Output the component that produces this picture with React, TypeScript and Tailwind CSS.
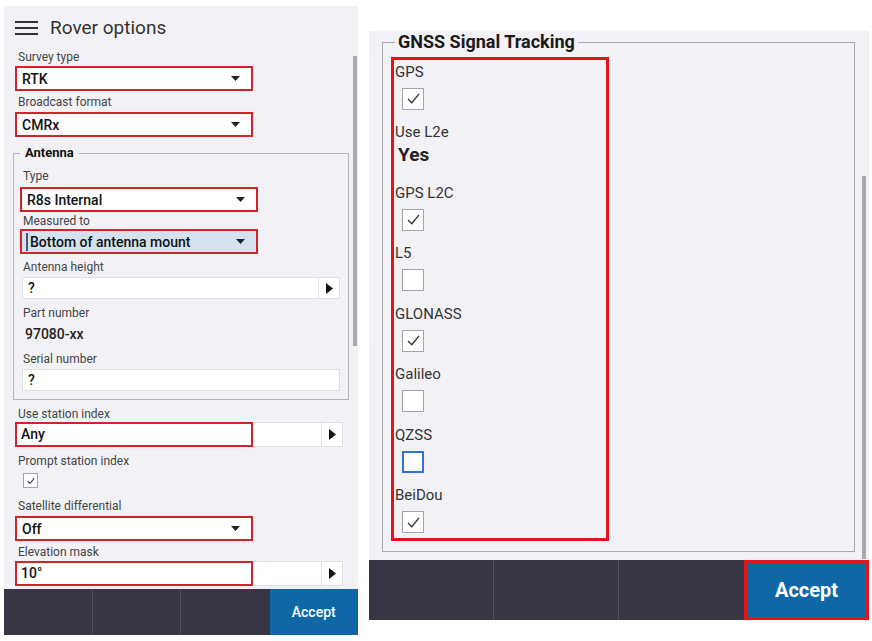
import React from "react";

type CheckProps = { checked?: boolean; size: number; focused?: boolean; className?: string };

function Check({ checked, size, focused, className = "" }: CheckProps) {
  return (
    <div
      className={`flex items-center justify-center bg-white ${
        focused ? "border-2 border-[#2f74d0]" : "border border-[#a3a3a8]"
      } ${className}`}
      style={{ width: size, height: size }}
    >
      {checked && (
        <svg viewBox="0 0 20 20" width={size - 5} height={size - 5}>
          <polyline
            points="3.5,10.5 8,15 16.5,4.5"
            fill="none"
            stroke="#333"
            strokeWidth={size < 18 ? 2.2 : 1.6}
          />
        </svg>
      )}
    </div>
  );
}

function Caret() {
  return (
    <svg width="9" height="5" viewBox="0 0 9 5">
      <polygon points="0,0 9,0 4.5,5" fill="#222" />
    </svg>
  );
}

function PlayArrow() {
  return (
    <svg width="7" height="11" viewBox="0 0 7 11">
      <polygon points="0,0 7,5.5 0,11" fill="#111" />
    </svg>
  );
}

function Label({ children, className = "" }: { children: React.ReactNode; className?: string }) {
  return <div className={`text-[12px] leading-[14px] text-[#444] ${className}`}>{children}</div>;
}

// dropdown with the red marker border
function Select({ value, active, className = "" }: { value: string; active?: boolean; className?: string }) {
  return (
    <div
      className={`flex h-[25px] w-[238px] items-center justify-between border-2 border-[#d4212a] pr-[11px] ${
        active ? "bg-[#d3e2ef] pl-[4px]" : "bg-white pl-[5px]"
      } ${className}`}
    >
      <span
        className={`text-[14px] font-medium leading-[18px] text-[#111] ${
          active ? "border-l-2 border-[#3d5d7d] pl-[2px]" : ""
        }`}
      >
        {value}
      </span>
      <Caret />
    </div>
  );
}

function ArrowInput({
  value,
  marked,
  width,
  height,
  arrow = true,
  className = "",
}: {
  value: string;
  marked?: boolean;
  width: number;
  height: number;
  arrow?: boolean;
  className?: string;
}) {
  return (
    <div
      className={`relative flex border border-[#dedee4] bg-white ${className}`}
      style={{ width, height }}
    >
      <div className="flex flex-1 items-center pl-[5px] text-[14px] font-medium text-[#111]">{value}</div>
      {arrow && (
        <div className="flex w-[21px] items-center justify-center border-l border-[#dedee4]">
          <PlayArrow />
        </div>
      )}
      {marked && (
        <div className="absolute -left-px -top-px h-[25px] w-[238px] border-2 border-[#d4212a]" />
      )}
    </div>
  );
}

function RoverOptions() {
  return (
    <div className="ml-[4px] mt-[6px] flex h-[629px] w-[354px] flex-col bg-[#f2f2f6]">
      <div className="relative flex-1">
        <div className="flex h-[44px] items-center gap-[12px] pl-[11px]">
          <div className="flex w-[23px] flex-col gap-[4px]">
            <span className="h-[2px] bg-[#333]" />
            <span className="h-[2px] bg-[#333]" />
            <span className="h-[2px] bg-[#333]" />
          </div>
          <span className="text-[19px] leading-[22px] text-[#333]">Rover options</span>
        </div>

        <Label className="pl-[14px]">Survey type</Label>
        <Select value="RTK" className="ml-[11px] mt-[2px]" />

        <Label className="mt-[4px] pl-[14px]">Broadcast format</Label>
        <Select value="CMRx" className="ml-[11px] mt-[3px]" />

        <fieldset className="ml-[9px] mt-[8px] w-[336px] border border-[#b4b4bc] pb-[8px] pl-[6px]">
          <legend className="px-[5px] text-[13px] font-bold leading-[16px] text-[#111]">Antenna</legend>
          <Label className="mt-[8px] pl-[3px]">Type</Label>
          <Select value="R8s Internal" className="mt-[4px]" />
          <Label className="mt-[2px] pl-[3px]">Measured to</Label>
          <Select value="Bottom of antenna mount" active className="mt-[1px]" />
          <Label className="mt-[6px] pl-[3px]">Antenna height</Label>
          <ArrowInput value="?" width={318} height={22} className="ml-[2px] mt-[3px]" />
          <Label className="mt-[7px] pl-[3px]">Part number</Label>
          <div className="mt-[5px] pl-[5px] text-[14px] font-medium leading-[18px] text-[#222]">97080-xx</div>
          <Label className="mt-[9px] pl-[3px]">Serial number</Label>
          <ArrowInput value="?" width={318} height={22} arrow={false} className="ml-[2px] mt-[3px]" />
        </fieldset>

        <Label className="mt-[7px] pl-[14px]">Use station index</Label>
        <ArrowInput value="Any" marked width={328} height={25} className="ml-[11px] mt-[1px]" />

        <Label className="mt-[7px] pl-[14px]">Prompt station index</Label>
        <Check checked size={15} className="ml-[19px] mt-[5px]" />

        <Label className="mt-[11px] pl-[14px]">Satellite differential</Label>
        <Select value="Off" className="ml-[11px] mt-[3px]" />

        <Label className="mt-[4px] pl-[14px]">Elevation mask</Label>
        <ArrowInput value="10°" marked width={328} height={25} className="ml-[11px] mt-[2px]" />

        <div className="absolute left-[349px] top-[50px] h-[290px] w-[4px] bg-[#a9a9b1]" />
      </div>

      <div className="grid h-[46px] grid-cols-4 bg-[#363644]">
        <div className="border-r border-[#50505e]" />
        <div className="border-r border-[#50505e]" />
        <div />
        <div className="flex items-center justify-center bg-[#0f67a6] text-[14px] font-medium text-white">Accept</div>
      </div>
    </div>
  );
}

const signals: { name: string; kind: "check" | "text"; checked?: boolean; focused?: boolean; text?: string }[] = [
  { name: "GPS", kind: "check", checked: true },
  { name: "Use L2e", kind: "text", text: "Yes" },
  { name: "GPS L2C", kind: "check", checked: true },
  { name: "L5", kind: "check" },
  { name: "GLONASS", kind: "check", checked: true },
  { name: "Galileo", kind: "check" },
  { name: "QZSS", kind: "check", focused: true },
  { name: "BeiDou", kind: "check", checked: true },
];

function SignalTracking() {
  return (
    <div className="ml-[11px] mt-[31px] flex h-[589px] w-[500px] flex-col bg-[#f2f2f6]">
      <div className="relative flex-1">
        <fieldset className="ml-[13px] mr-[14px] h-[521px] border border-[#a9a9b0]">
          <legend className="ml-[12px] px-[3px] text-[18px] font-bold leading-[22px] text-[#1a1a1a]">
            GNSS Signal Tracking
          </legend>
          <div className="ml-[8px] mt-[4px] flex h-[484px] w-[218px] flex-col gap-[13.5px] border-[3px] border-[#e3141b] pl-[1px] pt-[2.5px]">
            {signals.map((s) => (
              <div key={s.name} className="h-[47px]">
                <div className="text-[15px] leading-[18px] text-[#333]">{s.name}</div>
                {s.kind === "check" ? (
                  <Check checked={s.checked} focused={s.focused} size={22} className="ml-[7px] mt-[7px]" />
                ) : (
                  <div className="ml-[3px] mt-[3px] text-[19px] font-bold leading-[22px] text-[#222]">{s.text}</div>
                )}
              </div>
            ))}
          </div>
        </fieldset>
        <div className="absolute bottom-[1px] left-[493px] top-[145px] w-[4px] bg-[#a9a9b1]" />
      </div>

      <div className="grid h-[60px] grid-cols-4 bg-[#363644]">
        <div className="border-r border-[#50505e]" />
        <div className="border-r border-[#50505e]" />
        <div />
        <div className="flex items-center justify-center border-[3px] border-[#e3141b] bg-[#0f67a6] text-[20px] font-bold text-white">
          Accept
        </div>
      </div>
    </div>
  );
}

export default function App() {
  return (
    <div className="flex h-[641px] w-[872px] bg-white font-['Roboto',sans-serif]">
      <RoverOptions />
      <SignalTracking />
    </div>
  );
}
